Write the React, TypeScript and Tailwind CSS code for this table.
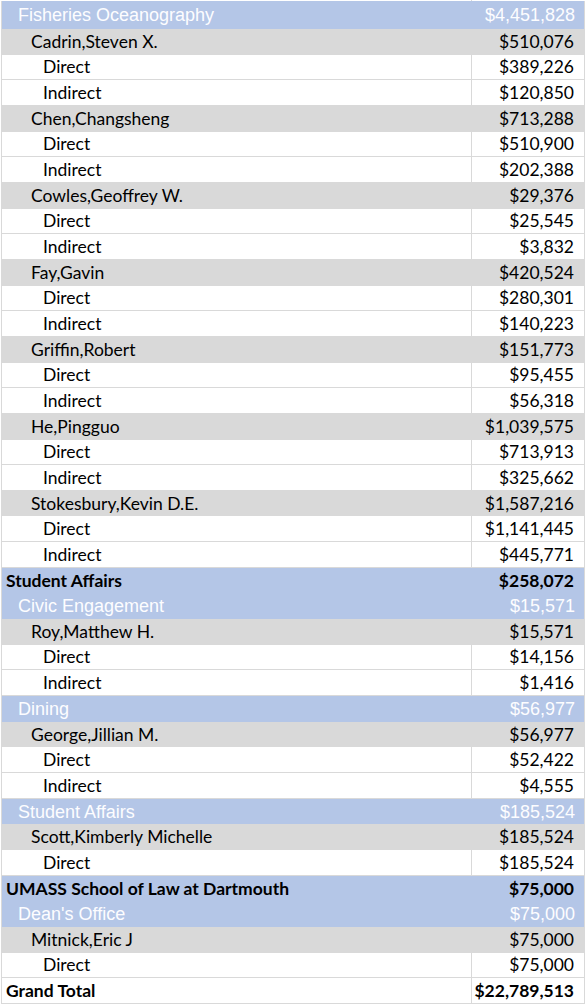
import React from "react";

type Kind = "top" | "sub" | "name" | "line" | "total";
type Row = [Kind, string, string];

const rows: Row[] = [
  ["sub", "Fisheries Oceanography", "$4,451,828"],
  ["name", "Cadrin,Steven X.", "$510,076"],
  ["line", "Direct", "$389,226"],
  ["line", "Indirect", "$120,850"],
  ["name", "Chen,Changsheng", "$713,288"],
  ["line", "Direct", "$510,900"],
  ["line", "Indirect", "$202,388"],
  ["name", "Cowles,Geoffrey W.", "$29,376"],
  ["line", "Direct", "$25,545"],
  ["line", "Indirect", "$3,832"],
  ["name", "Fay,Gavin", "$420,524"],
  ["line", "Direct", "$280,301"],
  ["line", "Indirect", "$140,223"],
  ["name", "Griffin,Robert", "$151,773"],
  ["line", "Direct", "$95,455"],
  ["line", "Indirect", "$56,318"],
  ["name", "He,Pingguo", "$1,039,575"],
  ["line", "Direct", "$713,913"],
  ["line", "Indirect", "$325,662"],
  ["name", "Stokesbury,Kevin D.E.", "$1,587,216"],
  ["line", "Direct", "$1,141,445"],
  ["line", "Indirect", "$445,771"],
  ["top", "Student Affairs", "$258,072"],
  ["sub", "Civic Engagement", "$15,571"],
  ["name", "Roy,Matthew H.", "$15,571"],
  ["line", "Direct", "$14,156"],
  ["line", "Indirect", "$1,416"],
  ["sub", "Dining", "$56,977"],
  ["name", "George,Jillian M.", "$56,977"],
  ["line", "Direct", "$52,422"],
  ["line", "Indirect", "$4,555"],
  ["sub", "Student Affairs", "$185,524"],
  ["name", "Scott,Kimberly Michelle", "$185,524"],
  ["line", "Direct", "$185,524"],
  ["top", "UMASS School of Law at Dartmouth", "$75,000"],
  ["sub", "Dean's Office", "$75,000"],
  ["name", "Mitnick,Eric J", "$75,000"],
  ["line", "Direct", "$75,000"],
  ["total", "Grand Total", "$22,789,513"],
];

function TableRow({ kind, label, amount, first }: { kind: Kind; label: string; amount: string; first: boolean }) {
  const h = first ? "h-[28px]" : "h-[25.67px]";
  if (kind === "sub") {
    return (
      <div className={`flex ${h} items-center bg-[#b4c6e7] text-[#fdfdff] font-['Liberation_Sans',Arial,sans-serif] text-[18px]`}>
        <div className="flex-1 pl-[16px] whitespace-nowrap">{label}</div>
        <div className="w-[112px] pr-[9px] text-right">{amount}</div>
      </div>
    );
  }
  if (kind === "top") {
    return (
      <div className={`flex ${h} items-center bg-[#b4c6e7] text-black font-bold text-[17.5px]`}>
        <div className="flex-1 pl-[4px] whitespace-nowrap">{label}</div>
        <div className="w-[112px] pr-[10px] text-right">{amount}</div>
      </div>
    );
  }
  if (kind === "name") {
    return (
      <div className={`flex ${h} items-center bg-[#d9d9d9] text-black text-[17.5px]`}>
        <div className="flex-1 pl-[29px] whitespace-nowrap">{label}</div>
        <div className="w-[112px] pr-[10px] text-right">{amount}</div>
      </div>
    );
  }
  const bold = kind === "total" ? "font-bold" : "";
  const indent = kind === "total" ? "pl-[4px]" : "pl-[41px]";
  return (
    <div className={`flex ${h} bg-white text-black text-[17.5px] ${bold} border-b border-[#d9d9d9]`}>
      <div className={`flex-1 flex items-center ${indent} whitespace-nowrap border-r border-[#d9d9d9]`}>{label}</div>
      <div className="w-[112px] flex items-center justify-end pr-[10px]">{amount}</div>
    </div>
  );
}

export default function App() {
  return (
    <div className="w-[586px] h-[1006px] overflow-hidden bg-white font-['Lato','Open_Sans',sans-serif] leading-none">
      <div className="h-[1px] flex">
        <div className="w-[472px] border-r border-[#d9d9d9]" />
      </div>
      <div className="ml-[2px] w-[582px] border-l border-r border-[#d9d9d9] -translate-x-[1px] box-content">
        {rows.map(([kind, label, amount], i) => (
          <TableRow key={i} kind={kind} label={label} amount={amount} first={i === 0} />
        ))}
      </div>
    </div>
  );
}
